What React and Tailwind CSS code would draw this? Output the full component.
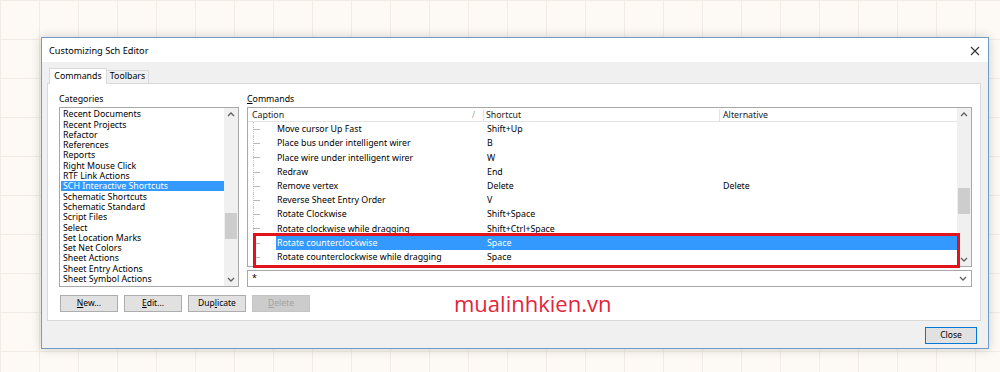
const categories = [
  "Recent Documents",
  "Recent Projects",
  "Refactor",
  "References",
  "Reports",
  "Right Mouse Click",
  "RTF Link Actions",
  "SCH Interactive Shortcuts",
  "Schematic Shortcuts",
  "Schematic Standard",
  "Script Files",
  "Select",
  "Set Location Marks",
  "Set Net Colors",
  "Sheet Actions",
  "Sheet Entry Actions",
  "Sheet Symbol Actions",
];

const commands = [
  { caption: "Move cursor Up Fast", shortcut: "Shift+Up" },
  { caption: "Place bus under intelligent wirer", shortcut: "B" },
  { caption: "Place wire under intelligent wirer", shortcut: "W" },
  { caption: "Redraw", shortcut: "End" },
  { caption: "Remove vertex", shortcut: "Delete", alt: "Delete" },
  { caption: "Reverse Sheet Entry Order", shortcut: "V" },
  { caption: "Rotate Clockwise", shortcut: "Shift+Space" },
  { caption: "Rotate clockwise while dragging", shortcut: "Shift+Ctrl+Space" },
  { caption: "Rotate counterclockwise", shortcut: "Space", selected: true },
  { caption: "Rotate counterclockwise while dragging", shortcut: "Space" },
];

const font = "font-['Noto_Sans','Open_Sans',sans-serif]";

function Chevron({ up }) {
  return (
    <svg width="8" height="5" viewBox="0 0 8 5">
      <polyline
        points={up ? "1,4 4,1 7,4" : "1,1 4,4 7,1"}
        fill="none"
        stroke="#606060"
        strokeWidth="1.3"
      />
    </svg>
  );
}

function Button({ children, disabled }) {
  return (
    <div
      className={
        disabled
          ? "w-[58px] h-[17px] flex items-center justify-center border border-[#c4c4c4] bg-[#cccccc] text-[#a3a3a3] text-[8.5px]"
          : "w-[58px] h-[17px] flex items-center justify-center border border-[#adadad] bg-[#e1e1e1] text-black text-[8.5px]"
      }
    >
      {children}
    </div>
  );
}

export default function App() {
  return (
    <div
      className={`w-[1000px] h-[372px] overflow-hidden bg-[#fdfaf6] bg-[linear-gradient(to_right,#f3ece4_1px,transparent_1px),linear-gradient(to_bottom,#f3ece4_1px,transparent_1px)] bg-[size:39px_39px] pt-[37px] pl-[41px] ${font}`}
    >
      <div className="w-[948px] h-[312px] border border-[#6f9cc9] bg-[#f0f0f0] flex flex-col shadow-[0_0_10px_rgba(0,0,0,0.18)]">
        {/* title bar */}
        <div className="h-[24px] bg-white flex items-center pl-[7px] pr-[8px] pt-[2px]">
          <span className="text-[9.2px] text-black">Customizing Sch Editor</span>
          <svg className="ml-auto" width="10" height="10" viewBox="0 0 10 10">
            <path d="M1 1 L9 9 M9 1 L1 9" stroke="#333" strokeWidth="1.1" />
          </svg>
        </div>

        <div className="flex-1 flex flex-col pl-[5px] pr-[7px]">
          {/* tabs */}
          <div className="h-[21px] flex items-end pl-[2px] relative z-10">
            <div className="w-[58px] h-[16px] -mb-px bg-white border border-b-0 border-[#d9d9d9] flex items-center justify-center text-[8.8px] text-black">
              Commands
            </div>
            <div className="w-[42px] h-[13px] border border-b-0 border-l-0 border-[#d9d9d9] flex items-center justify-center text-[8.8px] text-black">
              Toolbars
            </div>
          </div>

          {/* panel */}
          <div className="relative h-[238px] bg-white border border-[#d9d9d9] pt-[8px] pl-[11px] pr-[8px] pb-[8px] flex flex-col">
            <div className="flex gap-[8px]">
              {/* categories */}
              <div className="w-[180px] flex flex-col">
                <div className="h-[15px] text-[8.8px] text-black leading-none pt-[3px]">
                  Cate<span className="underline">g</span>ories
                </div>
                <div className="h-[180px] border border-[#a8a8a8] flex">
                  <div className="flex-1 pt-[1px] pl-[1px]">
                    {categories.map((c) => (
                      <div
                        key={c}
                        className={
                          c === "SCH Interactive Shortcuts"
                            ? "h-[10.3px] flex items-center pl-[2px] pt-px bg-[#3399ff] text-white text-[8.8px] leading-none"
                            : "h-[10.3px] flex items-center pl-[2px] pt-px text-black text-[8.8px] leading-none"
                        }
                      >
                        {c}
                      </div>
                    ))}
                  </div>
                  <div className="w-[14px] bg-[#f0f0f0] flex flex-col items-center">
                    <div className="h-[13px] flex items-center">
                      <Chevron up />
                    </div>
                    <div className="mt-[92px] w-[12px] h-[26px] bg-[#cdcdcd]" />
                    <div className="mt-auto h-[13px] flex items-center">
                      <Chevron />
                    </div>
                  </div>
                </div>
              </div>

              {/* commands */}
              <div className="flex-1 flex flex-col">
                <div className="h-[15px] text-[8.8px] text-black leading-none pt-[3px]">
                  <span className="underline">C</span>ommands
                </div>
                <div className="relative h-[160px] border border-[#a8a8a8] flex">
                  <div className="flex-1 flex flex-col">
                    <div className="h-[14px] pt-px border-b border-[#e3e3e3] flex text-[8.8px] text-[#222] leading-none">
                      <div className="w-[236px] flex items-center pl-[4px] border-r border-[#e3e3e3]">
                        Caption
                        <span className="ml-auto mr-[8px] text-[8px] text-[#999]">/</span>
                      </div>
                      <div className="w-[236px] flex items-center pl-[2px] border-r border-[#e3e3e3]">
                        Shortcut
                      </div>
                      <div className="flex-1 flex items-center pl-[3px]">Alternative</div>
                    </div>
                    {commands.map((r) => (
                      <div key={r.caption} className="h-[14.2px] flex text-[8.8px] leading-none">
                        <div className="w-[28px] relative">
                          <div className="absolute left-[5px] top-0 bottom-0 border-l border-dotted border-[#c8c8c8]" />
                          <div className="absolute left-[5px] top-[7px] w-[7px] border-t border-[#b8b8b8]" />
                        </div>
                        <div
                          className={
                            r.selected
                              ? "flex-1 flex pt-px bg-[#3399ff] text-white"
                              : "flex-1 flex pt-px text-black"
                          }
                        >
                          <div className="w-[208px] flex items-center pl-[1px]">{r.caption}</div>
                          <div className="w-[236px] flex items-center pl-[3px]">{r.shortcut}</div>
                          <div className="flex-1 flex items-center pl-[3px]">{r.alt}</div>
                        </div>
                      </div>
                    ))}
                  </div>
                  <div className="w-[14px] bg-[#f0f0f0] flex flex-col items-center">
                    <div className="h-[13px] flex items-center">
                      <Chevron up />
                    </div>
                    <div className="mt-[67px] w-[12px] h-[26px] bg-[#cdcdcd]" />
                    <div className="mt-auto h-[13px] flex items-center">
                      <Chevron />
                    </div>
                  </div>
                  {/* red highlight annotation */}
                  <div className="absolute left-[5px] top-[125px] w-[707px] h-[35px] border-[3px] border-[#e3131d]" />
                </div>
                <div className="mt-[3px] h-[17px] border border-[#a8a8a8] flex items-center pl-[4px] pr-[4px] text-[8.8px] text-black">
                  *
                  <span className="ml-auto">
                    <Chevron />
                  </span>
                </div>
              </div>
            </div>

            {/* buttons */}
            <div className="mt-[8px] flex gap-[6px] pl-[1px]">
              <Button>
                <span className="underline">N</span>ew...
              </Button>
              <Button>
                <span className="underline">E</span>dit...
              </Button>
              <Button>
                Dup<span className="underline">l</span>icate
              </Button>
              <Button disabled>
                <span className="underline">D</span>elete
              </Button>
            </div>

            {/* watermark */}
            <div className="absolute left-[406px] top-[208px] text-[22px] leading-none text-[#e3243b] font-['Open_Sans',sans-serif]">
              mualinhkien.vn
            </div>
          </div>

          {/* footer */}
          <div className="flex-1 flex justify-end pt-[6px] pr-[4px]">
            <div className="w-[52px] h-[17px] border border-[#0078d7] bg-[#e1e1e1] flex items-center justify-center text-[8.5px] text-black">
              Close
            </div>
          </div>
        </div>
      </div>
    </div>
  );
}
